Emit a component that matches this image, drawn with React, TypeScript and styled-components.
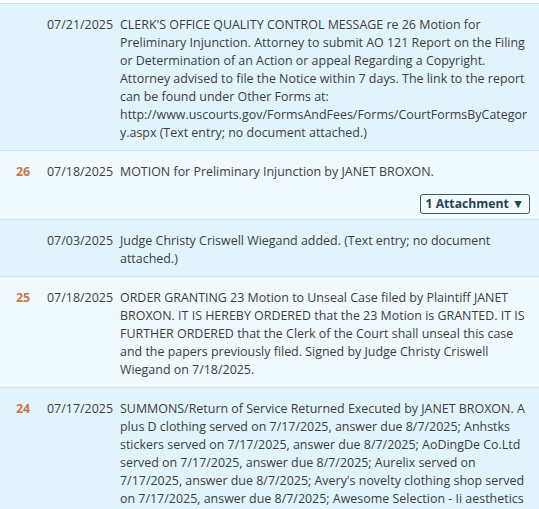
import React from "react";
import styled, { createGlobalStyle } from "styled-components";

const Global = createGlobalStyle`
  html, body { margin: 0; padding: 0; background: #ffffff; overflow: hidden; }
  body { font-family: "Open Sans", "Noto Sans", "Liberation Sans", sans-serif; }
`;

const Page = styled.div`
  padding-top: 3px;
  height: 506px;
  overflow: hidden;
`;

const Row = styled.div<{ $alt?: boolean }>`
  display: grid;
  grid-template-columns: 31px 73px 1fr;
  padding: 12px 9px 8px 16px;
  border-top: 1px solid #c8e6f1;
  background: ${(p) => (p.$alt ? "#f0f9fd" : "#e1f4fc")};
  font-size: 12.45px;
  line-height: 18px;
  color: #3d3d3d;
`;

const DocNum = styled.div`
  font-weight: 700;
  color: #c6784a;
`;

const DateCell = styled.div`
  white-space: nowrap;
`;

const Desc = styled.div`
  display: flex;
  flex-direction: column;
`;

const Line = styled.span`
  white-space: nowrap;
`;

const AttachRow = styled.div`
  display: flex;
  justify-content: flex-end;
  margin: 13px 0 -3px;
`;

const AttachButton = styled.button`
  font-family: inherit;
  font-size: 12.2px;
  font-weight: 700;
  line-height: 16px;
  color: #28444f;
  background: #f2fafd;
  border: 1px solid #3a5c68;
  border-radius: 3px;
  padding: 1px 5px 1px 5px;
  cursor: pointer;
`;

type Entry = {
  num?: string;
  date: string;
  lines: string[];
  attachment?: string;
};

const entries: Entry[] = [
  {
    date: "07/21/2025",
    lines: [
      "CLERK'S OFFICE QUALITY CONTROL MESSAGE re 26 Motion for",
      "Preliminary Injunction. Attorney to submit AO 121 Report on the Filing",
      "or Determination of an Action or appeal Regarding a Copyright.",
      "Attorney advised to file the Notice within 7 days. The link to the report",
      "can be found under Other Forms at:",
      "http://www.uscourts.gov/FormsAndFees/Forms/CourtFormsByCategor",
      "y.aspx (Text entry; no document attached.)",
    ],
  },
  {
    num: "26",
    date: "07/18/2025",
    lines: ["MOTION for Preliminary Injunction by JANET BROXON."],
    attachment: "1 Attachment \u25BC",
  },
  {
    date: "07/03/2025",
    lines: [
      "Judge Christy Criswell Wiegand added. (Text entry; no document",
      "attached.)",
    ],
  },
  {
    num: "25",
    date: "07/18/2025",
    lines: [
      "ORDER GRANTING 23 Motion to Unseal Case filed by Plaintiff JANET",
      "BROXON. IT IS HEREBY ORDERED that the 23 Motion is GRANTED. IT IS",
      "FURTHER ORDERED that the Clerk of the Court shall unseal this case",
      "and the papers previously filed. Signed by Judge Christy Criswell",
      "Wiegand on 7/18/2025.",
    ],
  },
  {
    num: "24",
    date: "07/17/2025",
    lines: [
      "SUMMONS/Return of Service Returned Executed by JANET BROXON. A",
      "plus D clothing served on 7/17/2025, answer due 8/7/2025; Anhstks",
      "stickers served on 7/17/2025, answer due 8/7/2025; AoDingDe Co.Ltd",
      "served on 7/17/2025, answer due 8/7/2025; Aurelix served on",
      "7/17/2025, answer due 8/7/2025; Avery's novelty clothing shop served",
      "on 7/17/2025, answer due 8/7/2025; Awesome Selection - Ii aesthetics",
    ],
  },
];

export default function App() {
  return (
    <Page>
      <Global />
      {entries.map((e, i) => (
        <Row key={i} $alt={i % 2 === 1}>
          <DocNum>{e.num ?? ""}</DocNum>
          <DateCell>{e.date}</DateCell>
          <Desc>
            {e.lines.map((l, j) => (
              <Line key={j}>{l}</Line>
            ))}
            {e.attachment && (
              <AttachRow>
                <AttachButton>{e.attachment}</AttachButton>
              </AttachRow>
            )}
          </Desc>
        </Row>
      ))}
    </Page>
  );
}
